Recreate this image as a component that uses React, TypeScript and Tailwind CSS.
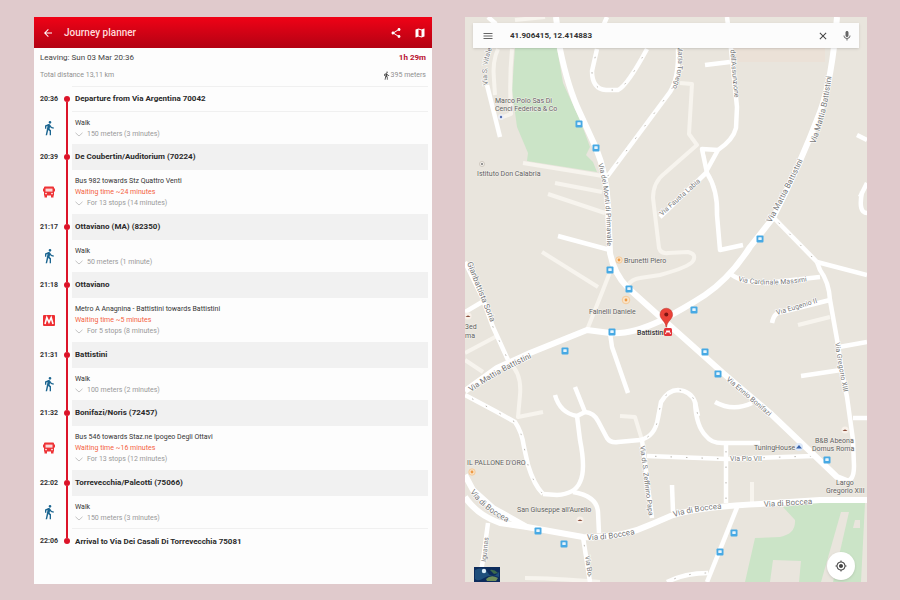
import React from "react";
import {
  MdArrowBack,
  MdClose,
  MdDirectionsWalk,
  MdMap,
  MdMenu,
  MdMic,
  MdMyLocation,
  MdShare,
} from "react-icons/md";

type Mode = "walk" | "bus" | "metro";

interface Leg {
  time: string;
  stop: string;
  mode: Mode;
  title: string;
  waiting?: string;
  detail: string;
}

const legs: Leg[] = [
  { time: "20:36", stop: "Departure from Via Argentina 70042", mode: "walk", title: "Walk", detail: "150 meters (3 minutes)" },
  { time: "20:39", stop: "De Coubertin/Auditorium (70224)", mode: "bus", title: "Bus 982 towards Stz Quattro Venti", waiting: "Waiting time ~24 minutes", detail: "For 13 stops (14 minutes)" },
  { time: "21:17", stop: "Ottaviano (MA) (82350)", mode: "walk", title: "Walk", detail: "50 meters (1 minute)" },
  { time: "21:18", stop: "Ottaviano", mode: "metro", title: "Metro A Anagnina - Battistini towards Battistini", waiting: "Waiting time ~5 minutes", detail: "For 5 stops (8 minutes)" },
  { time: "21:31", stop: "Battistini", mode: "walk", title: "Walk", detail: "100 meters (2 minutes)" },
  { time: "21:32", stop: "Bonifazi/Noris (72457)", mode: "bus", title: "Bus 546 towards Staz.ne Ipogeo Degli Ottavi", waiting: "Waiting time ~16 minutes", detail: "For 13 stops (12 minutes)" },
  { time: "22:02", stop: "Torrevecchia/Paleotti (75066)", mode: "walk", title: "Walk", detail: "150 meters (3 minutes)" },
];

const MetroIcon = () => (
  <svg viewBox="0 0 12 11" className="h-[11px] w-3" aria-hidden="true">
    <rect width="12" height="11" rx="1" fill="#ee2f33" />
    <path d="M2 9 L3.8 2.6 L6 7.4 L8.2 2.6 L10 9" fill="none" stroke="#fff" strokeWidth="1.6" />
  </svg>
);

const BusIcon = () => (
  <svg viewBox="0 0 12 12" className="h-3 w-3" aria-hidden="true">
    <path d="M2 .5 H10 Q11 .5 11 1.5 V2.500 H12 V5.500 H11 V9.500 H1 V5.500 H0 V2.500 H1 V1.500 Q1 .5 2 .5 Z" fill="#ee3336" />
    <path d="M1.500 9 H4 V11.500 H1.500 Z M8 9 H10.500 V11.500 H8 Z" fill="#ee3336" />
    <path d="M2.500 2.600 H9.500 V5.600 H2.500 Z" fill="#fbd9d9" />
    <circle cx="3" cy="7.600" r=".8" fill="#fff" />
    <circle cx="9" cy="7.600" r=".8" fill="#fff" />
  </svg>
);

const ModeIcon = ({ mode }: { mode: Mode }) => {
  if (mode === "walk") return <MdDirectionsWalk className="h-4 w-4 stroke-[#1c6691] text-[#1c6691]" />;
  if (mode === "bus") return <BusIcon />;
  return <MetroIcon />;
};

// The red line is built per row, so it grows with the list
const Rail = ({ start, end }: { start?: boolean; end?: boolean }) => (
  <div className="flex flex-col items-center">
    <span className={`w-0.5 flex-1 ${start ? "" : "bg-[#dc1429]"}`} />
    <span className="h-1.5 w-1.5 shrink-0 rounded-full bg-[#dc1429]" />
    <span className={`w-0.5 flex-1 ${end ? "" : "bg-[#dc1429]"}`} />
  </div>
);

interface StopProps {
  time: string;
  name: string;
  start?: boolean;
  end?: boolean;
}

const StopRow = ({ time, name, start, end }: StopProps) => (
  <div className="grid h-[26px] grid-cols-[28px_10px_1fr]">
    <time className="self-center pl-0.5 text-center text-[7px] font-bold text-[#333]">{time}</time>
    <Rail start={start} end={end} />
    <h2
      className={`mr-1 flex items-center pl-[3px] text-[8px] font-bold text-[#2a2a2a] ${
        start ? "border-y border-[#f0f0f0]" : end ? "border-t border-[#f0f0f0]" : "bg-[#f1f1f1]"
      }`}
    >
      {name}
    </h2>
  </div>
);

const LegRow = ({ leg }: { leg: Leg }) => (
  <div className={`grid grid-cols-[28px_10px_1fr] ${leg.waiting ? "h-11" : "h-8"}`}>
    <span className="flex items-center justify-center pl-0.5">
      <ModeIcon mode={leg.mode} />
    </span>
    <span className="w-0.5 justify-self-center bg-[#dc1429]" />
    <div className="flex flex-col justify-center pt-px pl-[3px] text-[7px] leading-[11px]">
      <p className="text-[#333]">{leg.title}</p>
      {leg.waiting && <p className="text-[#f4623f]">{leg.waiting}</p>}
      <button type="button" className="flex items-center gap-1 text-left text-[#999]">
        <svg viewBox="0 0 8 5" className="h-[5px] w-2" aria-hidden="true">
          <path d="M.5 .8 L4 4 L7.5 .8" fill="none" stroke="#b5b5b5" strokeWidth=".8" />
        </svg>
        {leg.detail}
      </button>
    </div>
  </div>
);

const JourneyPanel = () => (
  <section className="bg-[#fdfdfd] pb-[30px]">
    <header className="flex h-[31px] items-center bg-linear-to-b from-[#f00216] to-[#b30213] pr-1.5 pl-2 text-white">
      <button type="button" aria-label="Back">
        <MdArrowBack className="h-3 w-3" />
      </button>
      <h1 className="ml-2.5 flex-1 text-[10px] font-medium text-[#ffdcdc]">Journey planner</h1>
      <button type="button" aria-label="Share" className="mr-3">
        <MdShare className="h-3 w-3" />
      </button>
      <button type="button" aria-label="Show on map">
        <MdMap className="h-3 w-3" />
      </button>
    </header>

    <div className="flex h-[38px] flex-col gap-1 px-1.5 pt-1">
      <div className="flex justify-between text-[8px] leading-3">
        <p className="text-[#444]">Leaving: Sun 03 Mar 20:36</p>
        <p className="font-bold text-[#b8122f]">1h 29m</p>
      </div>
      <div className="flex justify-between text-[7px] leading-[14px] text-[#8f8f8f]">
        <p>Total distance 13,11 km</p>
        <p className="flex items-center">
          <MdDirectionsWalk className="h-[9px] w-[9px] text-[#444]" />
          395 meters
        </p>
      </div>
    </div>

    <ol>
      {legs.map((leg, i) => (
        <li key={leg.time}>
          <StopRow time={leg.time} name={leg.stop} start={i === 0} />
          <LegRow leg={leg} />
        </li>
      ))}
      <li>
        <StopRow time="22:06" name="Arrival to Via Dei Casali Di Torrevecchia 75081" end />
      </li>
    </ol>
  </section>
);

const minorRoads = [
  "M498 49 Q492 62 494 80 L495 95",
  "M512 49 Q509 80 511 114 L503 117",
  "M523 163 L603 176",
  "M555 183 L602 192",
  "M548 194 L605 213",
  "M542 252 L598 287",
  "M610 272 L603 290 L587 330",
  "M680 83 L692 84 L689 134 L697 145 L665 173 Q653 182 653 198 L659 248 Q661 254 668 253 L688 252 Q697 254 693 261 Q689 267 660 275 L640 278 Q632 279 628 285",
  "M465 353 L497 336",
  "M465 360 L483 372",
  "M508 362 Q522 372 520 395 L518 417 L543 412",
  "M620 416 L635 417 L642 440",
  "M798 325 L830 317",
  "M752 482 L752 503",
  "M525 578 Q550 578 600 582",
  "M515 20 L545 17",
];

const roads = [
  "M558 236 L610 250",
  "M487 85 L500 137",
  "M607 17 L604 24",
  "M488 17 L496 24",
  "M727 17 L731 49 L737 107 L736 128 Q733 140 718 150 L707 170",
  "M718 150 L702 149 L707 173 Q718 190 717 215 L720 250 L743 245",
  "M705 65 L730 62",
  "M707 172 L660 217",
  "M817 262 L820 270 Q829 282 830 300 L838 345 L842 372 L847 397 L853 440 L854 466 Q854 482 845 481",
  "M817 262 L867 275",
  "M730 273 Q738 282 765 283 L820 277",
  "M772 323 Q774 312 782 312 L830 300",
  "M839 347 L867 342",
  "M801 376 L841 370",
  "M867 183 L860 197 M862 192 Q858 213 867 213",
  "M857 135 L867 140",
  "M853 418 L867 418",
  "M465 312 L482 302",
  "M610 333 L612 347 L628 393",
  "M543 494 L557 495 Q575 494 580 482 Q586 470 580 440 L577 416",
  "M555 395 Q560 413 577 416 L585 412 L575 387",
  "M585 412 Q594 413 598 421 L607 438 Q610 443 618 442 L640 440",
  "M695 402 Q696 426 706 436 Q712 444 725 443 L760 443",
  "M573 492 Q597 496 598 512 L599 533",
  "M488 523 L483 560 L479 582",
  "M642 440 L652 518",
  "M738 505 L707 582",
  "M672 485 L673 512",
  "M715 402 Q733 412 752 403",
];

// One-way streets carry small grey arrows along their length
const oneWayRoads = [
  "M597 49 L592 71 Q592 89 606 90 L618 90 Q627 86 647 49",
  "M678 49 Q679 78 670 92 L607 177",
  "M773 217 L817 262",
  "M465 262 L482 297 L493 327 L508 360",
  "M465 395 L497 412 L515 422 Q522 432 524 447 L528 465 Q534 485 543 494",
  "M640 440 Q655 437 658 418 L661 402 Q668 390 678 390 Q691 391 695 402 L698 416",
  "M583 537 L590 582",
  "M647 456 L727 459 L813 456",
  "M726 443 L726 503",
  "M667 582 Q685 573 708 573",
];

const mainRoads = [
  "M556 17 L560 49 Q568 88 580 113 L596 148 Q606 172 608 205 L610 253 Q614 274 628 288 L667 323 L723 373 L770 413 L837 477 L847 481",
  "M837 17 Q832 80 820 112 Q800 165 773 218 L750 247 Q730 278 705 295 Q685 308 660 321 Q630 335 610 333 L587 330 L530 353 L497 368 L465 391",
  "M465 475 L473 490 L493 508 L527 527",
  "M465 497 Q477 515 500 523 L527 527 L583 537 Q620 539 652 524 L673 515 Q700 507 760 504 L820 500 L867 500",
];

const stops = [
  [579, 124], [596, 148], [610, 270], [629, 289], [612, 332], [565, 351], [760, 239], [694, 310],
  [705, 352], [718, 374], [538, 531], [564, 544], [827, 460], [734, 533], [720, 552],
];

// Street names follow a path of their own, laid on the road
const streets = [
  { id: "vitale", d: "M488 85 Q484 62 496 40", name: "Via S. Vitale", size: 7 },
  { id: "tonego", d: "M677 46 Q682 72 667 100", name: "Maria Tonego", size: 7 },
  { id: "assunzione", d: "M730 38 L731 60 L736 112", name: "Via dell'Assunzione", size: 7 },
  { id: "battistini-n", d: "M815 144 Q830 105 833 60", name: "Via Mattia Battistini", size: 8 },
  { id: "battistini-e", d: "M771 223 Q795 180 812 140", name: "Via Mattia Battistini", size: 8 },
  { id: "battistini-w", d: "M471 392 Q500 371 545 352", name: "Via Mattia Battistini", size: 8 },
  { id: "primavalle", d: "M598 164 Q608 195 607 260", name: "Via dei Monti di Primavalle", size: 7 },
  { id: "labia", d: "M662 216 L708 175", name: "Via Fausta Labia", size: 7 },
  { id: "soria", d: "M467 263 L479 294 L500 345", name: "Gianbattista Soria", size: 8 },
  { id: "massimi", d: "M738 281 Q770 289 820 279", name: "Via Cardinale Massimi", size: 7 },
  { id: "eugenio", d: "M777 315 L830 299", name: "Via Eugenio II", size: 7 },
  { id: "gregorio", d: "M835 343 Q839 372 847 408", name: "Via Gregorio XIII", size: 7 },
  { id: "bonifazi", d: "M726 380 L785 430", name: "Via Ennio Bonifazi", size: 7 },
  { id: "pio", d: "M730 461 L775 461", name: "Via Pio VII", size: 7 },
  { id: "zeffirino", d: "M640 446 L650 526", name: "Via di S. Zeffirino Papa", size: 7 },
  { id: "boccea-w", d: "M470 492 Q487 516 525 530", name: "Via di Boccea", size: 8 },
  { id: "boccea-c", d: "M587 540 Q615 540 650 530", name: "Via di Boccea", size: 8 },
  { id: "boccea-e", d: "M674 517 Q700 509 735 508", name: "Via di Boccea", size: 8 },
  { id: "boccea-ee", d: "M764 507 L830 503", name: "Via di Boccea", size: 8 },
  { id: "aurelia", d: "M486 562 L490 525", name: "Iguanas", size: 7 },
  { id: "bo", d: "M585 556 L589 584", name: "Via Bo", size: 7 },
];

const places = [
  { x: 495, y: 103, name: "Marco Polo Sas Di" },
  { x: 495, y: 111, name: "Cenci Federica & Co" },
  { x: 477, y: 176, name: "Istituto Don Calabria" },
  { x: 624, y: 263, name: "Brunetti Piero" },
  { x: 589, y: 314, name: "Fainelli Daniele" },
  { x: 465, y: 329, name: "3ed" },
  { x: 465, y: 338, name: "ma" },
  { x: 467, y: 465, name: "IL PALLONE D'ORO" },
  { x: 517, y: 512, name: "San Giuseppe all'Aurelio" },
  { x: 754, y: 450, name: "TuningHouse" },
  { x: 815, y: 443, name: "B&B Abeona" },
  { x: 812, y: 451, name: "Domus Roma" },
  { x: 836, y: 485, name: "Largo" },
  { x: 826, y: 493, name: "Gregorio XIII" },
];

const CityMap = () => (
  <svg
    viewBox="465 17 402 565"
    preserveAspectRatio="xMidYMid slice"
    className="absolute inset-0 h-full w-full"
    role="img"
    aria-label="Map around Battistini"
  >
    <rect x="465" y="17" width="402" height="565" fill="#e9e5dd" />
    <path d="M731 48 H825 V62 H735 Z" fill="#ebe1d7" />

    {/* Parks */}
    <g fill="#cbe4c7">
      <path d="M515 48 H557 L563 83 L580 120 L590 147 L586 155 L593 162 L597 172 L527 161 L528 153 L517 127 L512 90 Z" />
      <path d="M783 507 L820 502 H867 V582 H745 L755 538 L780 537 Q796 534 795 520 Z" />
    </g>
    <g fill="#e9e5dd">
      <path d="M770 582 L773 560 L801 561 L799 582 Z" />
      <path d="M841 512 H849 L833 582 H821 Z" />
      <path d="M855 520 H860 V528 H853 Z" />
      <path d="M865 503 H867 V582 H861 Z" />
    </g>

    <g fill="none" strokeLinejoin="round">
      <g stroke="#f7f4ee" strokeWidth="4">
        {minorRoads.map((d) => <path key={d} d={d} />)}
      </g>
      <g stroke="#fff" strokeWidth="4.500">
        {roads.map((d) => <path key={d} d={d} />)}
        {oneWayRoads.map((d) => <path key={d} d={d} />)}
      </g>
      <g stroke="#b9b5ae" strokeWidth="1" strokeDasharray="1.500 14" strokeDashoffset="-8">
        {oneWayRoads.map((d) => <path key={d} d={d} />)}
      </g>
      <g stroke="#fff" strokeWidth="6">
        {mainRoads.map((d) => <path key={d} d={d} />)}
      </g>
    </g>
    <path d="M705 153 L712 153 L708 159 Z" fill="#e9e5dd" />

    <g fill="#777" stroke="#fff" strokeWidth="1.2" paintOrder="stroke">
      {streets.map((s) => (
        <React.Fragment key={s.id}>
          <path id={s.id} d={s.d} fill="none" stroke="none" />
          <text fontSize={s.size}>
            <textPath href={`#${s.id}`}>{s.name}</textPath>
          </text>
        </React.Fragment>
      ))}
    </g>

    <g fill="#5f5f5f" stroke="#f4f1ec" strokeWidth="1" paintOrder="stroke" fontSize="7">
      {places.map((p) => (
        <text key={p.name} x={p.x} y={p.y}>{p.name}</text>
      ))}
      <text x="637" y="335" fill="#333" fontWeight="500">Battistini</text>
    </g>

    {/* Bus stops */}
    {stops.map(([x, y]) => (
      <g key={`${x}-${y}`}>
        <rect x={x - 3.5} y={y - 3.5} width="7" height="7" rx="1" fill="#47a9e4" />
        <rect x={x - 1.7} y={y - 1.8} width="3.4" height="2.8" rx=".5" fill="#e6f4fc" />
      </g>
    ))}

    {/* Points of interest */}
    <g fill="#f9e3c8" stroke="#f5c48c" strokeWidth=".8">
      <circle cx="619" cy="260" r="3.200" />
      <circle cx="626" cy="300" r="3.800" />
      <circle cx="472" cy="472" r="3.200" />
    </g>
    <g fill="#ee9a45">
      <circle cx="619" cy="260" r="1.400" />
      <circle cx="626" cy="300" r="1.400" />
      <circle cx="472" cy="472" r="1.400" />
    </g>
    <circle cx="482" cy="164" r="2.5" fill="#f4f1ec" stroke="#c8c0b6" strokeWidth=".8" />
    <circle cx="482" cy="164" r="1" fill="#777" />
    <circle cx="501" cy="117" r="3" fill="#eef0f6" />
    <circle cx="501" cy="117" r="1.2" fill="#5471b5" />
    <circle cx="799" cy="447" r="4" fill="#dfe9f7" />
    <path d="M796 448.500 L799 445 L802 448.500 Z" fill="#3663ad" />
    <g fill="#f8f1ea">
      <circle cx="845" cy="430" r="3.500" />
      <circle cx="580" cy="520" r="3.500" />
      <circle cx="468" cy="316" r="3.500" />
    </g>
    <path d="M842.500 431 q2.500 -3 5 0 Z M577.500 521 q2.500 -3 5 0 Z M465.500 317 q2.500 -3 5 0 Z" fill="#8b4f3c" />

    {/* Metro sign and marker */}
    <rect x="664" y="328" width="8" height="8" rx="1.500" fill="#e5343a" />
    <path d="M665.500 334 L667 330.500 L668 332.500 L669 330.500 L670.500 334" fill="none" stroke="#fff" strokeWidth="1" />
    <path d="M666 327 C665.500 321 660 319.500 660 314.500 A6.300 6.300 0 0 1 672.600 314.500 C672.600 319.500 667 321 666.600 327 Z" fill="#ea4238" stroke="#b8322b" strokeWidth=".5" />
    <circle cx="666.300" cy="314.500" r="2" fill="#7d1512" />
  </svg>
);

const MapPanel = () => (
  <section className="relative mb-0.5 flex flex-col justify-between overflow-hidden">
    <CityMap />
    <form className="relative mx-2 mt-1.5 flex h-[25px] items-center bg-[#fcfcfc] pr-1.5 pl-[9px] text-[#666] shadow-sm">
      <button type="button" aria-label="Menu">
        <MdMenu className="h-3 w-3" />
      </button>
      <input
        aria-label="Search location"
        defaultValue="41.906415, 12.414883"
        className="ml-4 min-w-0 flex-1 bg-transparent text-[8px] font-bold text-[#333] outline-none"
      />
      <button type="button" aria-label="Clear" className="mr-3">
        <MdClose className="h-3 w-3 text-[#444]" />
      </button>
      <button type="button" aria-label="Voice search">
        <MdMic className="h-3 w-3" />
      </button>
    </form>

    <div className="relative flex items-end justify-between pr-3 pl-[9px]">
      <button type="button" aria-label="Satellite view">
        <svg viewBox="0 0 26 15" className="block h-[15px] w-[26px]" aria-hidden="true">
          <rect width="26" height="15" fill="#0d2c5c" />
          <path d="M1 3 Q10 -1 14 6 T25 5 V10 Q16 7 10 11 T1 12 Z" fill="#1f4f7c" />
          <path d="M12 12 Q17 7 24 11 L22 14 H13 Z" fill="#6f8f5a" />
          <path d="M16 3 Q20 2 24 6 L20 7 Z" fill="#3c6b4c" />
          <circle cx="10" cy="4" r="2.200" fill="#dcecf8" />
        </svg>
      </button>
      <button
        type="button"
        aria-label="My location"
        className="mb-0.5 flex h-7 w-7 items-center justify-center rounded-full bg-white shadow-sm"
      >
        <MdMyLocation className="h-3 w-3 text-[#444]" />
      </button>
    </div>
  </section>
);

export default function App() {
  return (
    <main className="grid min-h-screen grid-cols-[398fr_402fr] content-start gap-[33px] bg-[#e0cacc] pt-[17px] pr-[33px] pb-4 pl-[34px] font-[Roboto,sans-serif]">
      <JourneyPanel />
      <MapPanel />
    </main>
  );
}
